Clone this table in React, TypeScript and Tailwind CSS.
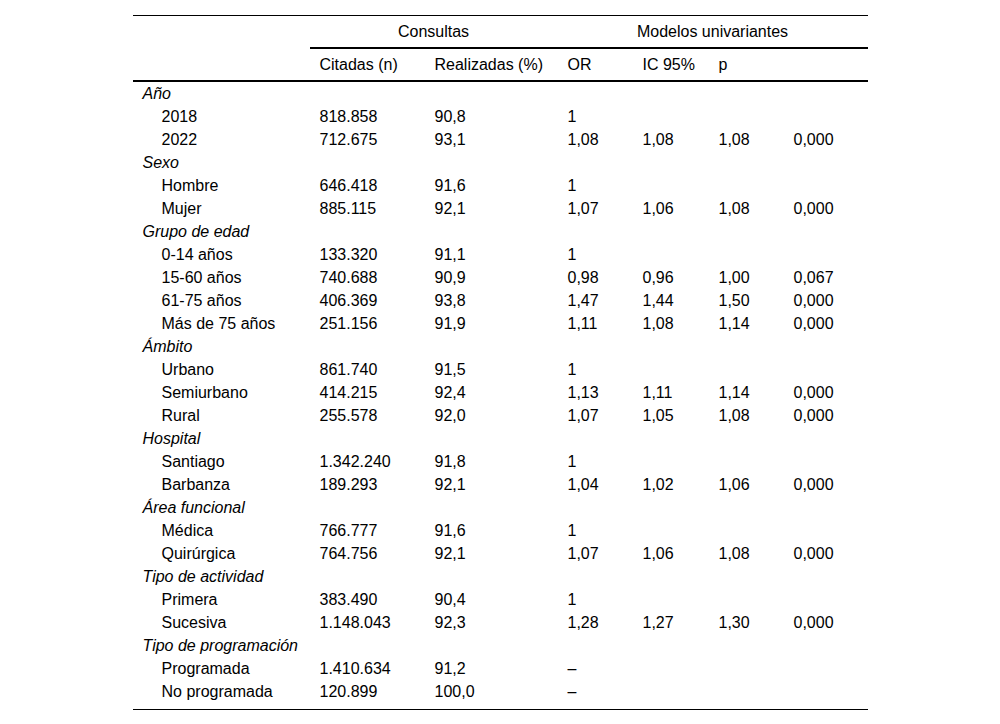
type Row = {
  label: string;
  group?: boolean;
  citadas?: string;
  realizadas?: string;
  or?: string;
  icLow?: string;
  icHigh?: string;
  p?: string;
};

const rows: Row[] = [
  { label: 'Año', group: true },
  { label: '2018', citadas: '818.858', realizadas: '90,8', or: '1' },
  { label: '2022', citadas: '712.675', realizadas: '93,1', or: '1,08', icLow: '1,08', icHigh: '1,08', p: '0,000' },
  { label: 'Sexo', group: true },
  { label: 'Hombre', citadas: '646.418', realizadas: '91,6', or: '1' },
  { label: 'Mujer', citadas: '885.115', realizadas: '92,1', or: '1,07', icLow: '1,06', icHigh: '1,08', p: '0,000' },
  { label: 'Grupo de edad', group: true },
  { label: '0-14 años', citadas: '133.320', realizadas: '91,1', or: '1' },
  { label: '15-60 años', citadas: '740.688', realizadas: '90,9', or: '0,98', icLow: '0,96', icHigh: '1,00', p: '0,067' },
  { label: '61-75 años', citadas: '406.369', realizadas: '93,8', or: '1,47', icLow: '1,44', icHigh: '1,50', p: '0,000' },
  { label: 'Más de 75 años', citadas: '251.156', realizadas: '91,9', or: '1,11', icLow: '1,08', icHigh: '1,14', p: '0,000' },
  { label: 'Ámbito', group: true },
  { label: 'Urbano', citadas: '861.740', realizadas: '91,5', or: '1' },
  { label: 'Semiurbano', citadas: '414.215', realizadas: '92,4', or: '1,13', icLow: '1,11', icHigh: '1,14', p: '0,000' },
  { label: 'Rural', citadas: '255.578', realizadas: '92,0', or: '1,07', icLow: '1,05', icHigh: '1,08', p: '0,000' },
  { label: 'Hospital', group: true },
  { label: 'Santiago', citadas: '1.342.240', realizadas: '91,8', or: '1' },
  { label: 'Barbanza', citadas: '189.293', realizadas: '92,1', or: '1,04', icLow: '1,02', icHigh: '1,06', p: '0,000' },
  { label: 'Área funcional', group: true },
  { label: 'Médica', citadas: '766.777', realizadas: '91,6', or: '1' },
  { label: 'Quirúrgica', citadas: '764.756', realizadas: '92,1', or: '1,07', icLow: '1,06', icHigh: '1,08', p: '0,000' },
  { label: 'Tipo de actividad', group: true },
  { label: 'Primera', citadas: '383.490', realizadas: '90,4', or: '1' },
  { label: 'Sucesiva', citadas: '1.148.043', realizadas: '92,3', or: '1,28', icLow: '1,27', icHigh: '1,30', p: '0,000' },
  { label: 'Tipo de programación', group: true },
  { label: 'Programada', citadas: '1.410.634', realizadas: '91,2', or: '–' },
  { label: 'No programada', citadas: '120.899', realizadas: '100,0', or: '–' },
];

const cell = 'h-[23px] p-0 pt-[2px] pl-[10px] align-middle whitespace-nowrap';

export default function App() {
  return (
    <div className="min-h-[724px] bg-white pt-[15px] font-['Liberation_Sans',Arial,sans-serif] text-[16px] leading-[18px] text-black">
      <div className="mx-auto w-[735px] border-t border-b border-black pb-[7px]">
        <table className="w-full table-fixed border-collapse">
          <colgroup>
            <col className="w-[177px]" />
            <col className="w-[115px]" />
            <col className="w-[133px]" />
            <col className="w-[75px]" />
            <col className="w-[76px]" />
            <col className="w-[75px]" />
            <col className="w-[84px]" />
          </colgroup>
          <thead>
            <tr>
              <th className="h-[32px] p-0" />
              <th colSpan={2} className="h-[32px] border-b-2 border-black p-0 text-center font-normal">
                Consultas
              </th>
              <th colSpan={4} className="h-[32px] border-b-2 border-black p-0 text-center font-normal">
                Modelos univariantes
              </th>
            </tr>
            <tr className="border-b-2 border-black">
              <th className="h-[33px] p-0" />
              <th className="h-[33px] p-0 pl-[10px] text-left font-normal">Citadas (n)</th>
              <th className="h-[33px] p-0 pl-[10px] text-left font-normal">Realizadas (%)</th>
              <th className="h-[33px] p-0 pl-[10px] text-left font-normal">OR</th>
              <th className="h-[33px] p-0 pl-[10px] text-left font-normal">IC 95%</th>
              <th className="h-[33px] p-0 pl-[10px] text-left font-normal">p</th>
              <th className="h-[33px] p-0" />
            </tr>
          </thead>
          <tbody>
            {rows.map((r) =>
              r.group ? (
                <tr key={r.label}>
                  <td className={`${cell} italic`}>{r.label}</td>
                  <td colSpan={6} className={cell} />
                </tr>
              ) : (
                <tr key={r.label}>
                  <td className={`${cell} pl-[29px]`}>{r.label}</td>
                  <td className={cell}>{r.citadas}</td>
                  <td className={cell}>{r.realizadas}</td>
                  <td className={cell}>{r.or}</td>
                  <td className={cell}>{r.icLow}</td>
                  <td className={cell}>{r.icHigh}</td>
                  <td className={cell}>{r.p}</td>
                </tr>
              )
            )}
          </tbody>
        </table>
      </div>
    </div>
  );
}
